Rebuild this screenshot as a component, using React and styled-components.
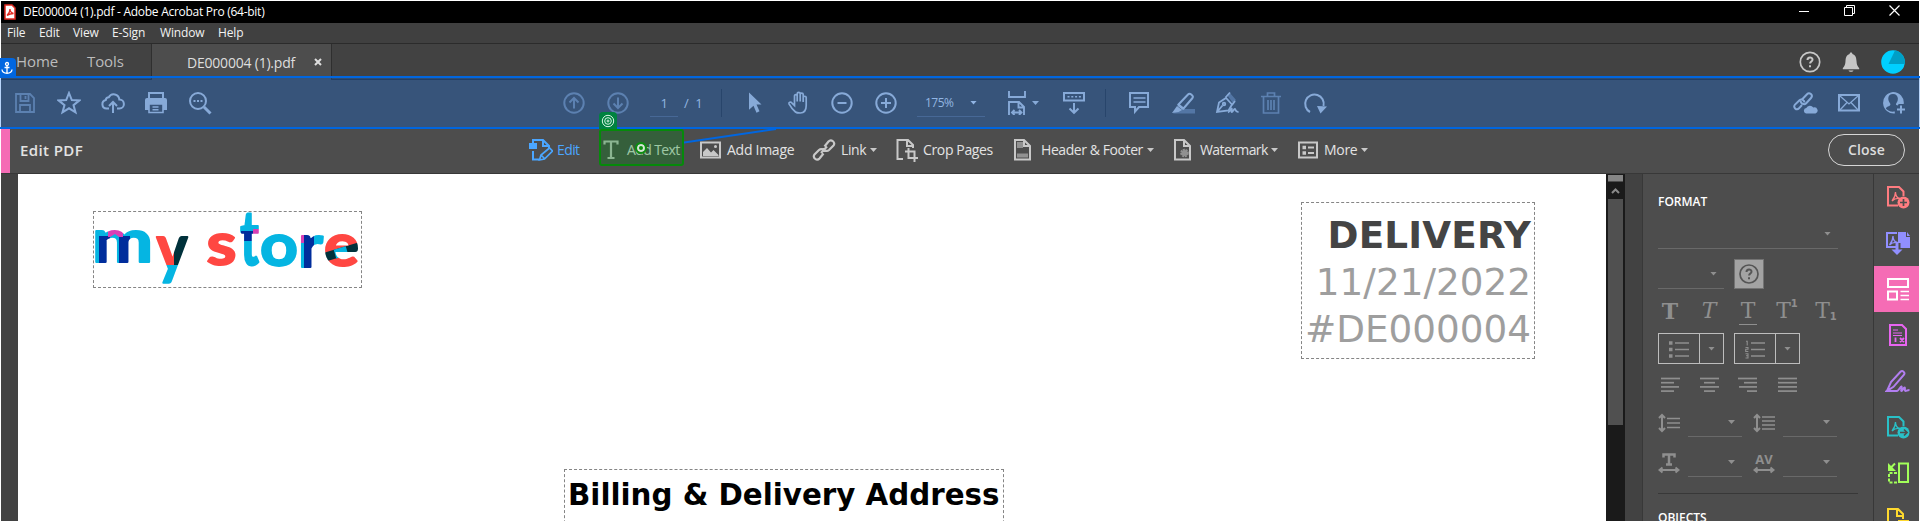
import React from "react";
import styled, { createGlobalStyle, css } from "styled-components";

const Global = createGlobalStyle`
  * { box-sizing: border-box; }
  body { margin: 0; background: #fff; overflow: hidden; }
`;

const Screen = styled.div`
  position: relative;
  width: 1920px;
  height: 521px;
  padding: 1px 1px 0;
  overflow: hidden;
  font-family: "Open Sans", "Noto Sans", sans-serif;
  color: #e3e3e3;
`;
const AppWindow = styled.div`
  display: flex;
  flex-direction: column;
  height: 520px;
  overflow: hidden;
  background: #4d4d4d;
`;

/* title and menu */
const TitleBar = styled.header`
  display: flex;
  align-items: center;
  flex: none;
  height: 22px;
  padding: 0 19px 0 3px;
  background: #000;
  color: #fff;
  font-size: 12px;
`;
const AppTitle = styled.span`
  flex: 1;
  margin-left: 7px;
  line-height: 20px;
  letter-spacing: -0.27px;
  white-space: nowrap;
`;
const WindowButtons = styled.div`
  display: flex;
  gap: 34px;
  margin-top: -3px;
`;
const MenuBar = styled.nav`
  display: flex;
  flex: none;
  gap: 14px;
  height: 21px;
  padding-left: 6px;
  background: #404040;
  border-bottom: 1px solid #2b2b2b;
  color: #f2f2f2;
  font-size: 12px;
  line-height: 20px;
`;
const MenuItem = styled.span`
  width: ${(p) => p.$w}px;
  letter-spacing: -0.15px;
  white-space: nowrap;
`;

/* document tabs */
const TabBar = styled.div`
  display: flex;
  flex: none;
  height: 36px;
  background: #424242;
  line-height: 35px;
`;
const TabLinks = styled.div`
  display: flex;
  gap: 29px;
  width: 151px;
  padding-left: 15px;
  border-right: 1px solid #2f2f2f;
  border-bottom: 1px solid #2f2f2f;
  color: #bcbcbc;
  font-size: 15px;
  letter-spacing: -0.1px;
`;
const DocumentTab = styled.div`
  display: flex;
  align-items: center;
  gap: 19px;
  width: 180px;
  padding-left: 35px;
  background: #4d4d4d;
  border-right: 1px solid #2f2f2f;
  color: #dedede;
  font-size: 14px;
  letter-spacing: -0.21px;
  white-space: nowrap;
`;
const TabActions = styled.div`
  display: flex;
  flex: 1;
  align-items: center;
  justify-content: flex-end;
  gap: 20px;
  padding-right: 14px;
  border-bottom: 1px solid #2f2f2f;
  color: #c6c6c6;
`;

/* main toolbar */
const Toolbar = styled.div`
  display: flex;
  align-items: center;
  flex: none;
  height: 49px;
  padding: 0 4px 1px 2px;
  border-bottom: 2px solid #3a3a3a;
  color: #bcc4cf;
`;
const ToolSlot = styled.div`
  display: flex;
  align-items: center;
  justify-content: center;
  flex: none;
  width: ${(p) => p.$w || 44}px;
  color: ${(p) => (p.$dim ? "#808b99" : "inherit")};
`;
const Spacer = styled.div`
  flex: none;
  width: ${(p) => p.$w}px;
`;
const Grow = styled.div`
  flex: 1;
`;
const ToolDivider = styled.div`
  flex: none;
  width: 1px;
  height: 28px;
  background: #383838;
`;
const NumberField = styled.div`
  display: flex;
  align-items: center;
  justify-content: ${(p) => (p.$between ? "space-between" : "center")};
  width: ${(p) => p.$w}px;
  height: 28px;
  padding: ${(p) => (p.$between ? "0 8px 0 8px" : 0)};
  border-bottom: 1px solid #636973;
  font-size: ${(p) => (p.$between ? 12 : 13)}px;
  letter-spacing: -0.5px;
  color: #c9d3df;
`;
const PageTotal = styled.span`
  width: 30px;
  margin-left: 6px;
  font-size: 13px;
  word-spacing: 3px;
  color: #c9d3df;
`;
const Caret = styled.i`
  flex: none;
  width: 7px;
  height: 4px;
  background: currentColor;
  clip-path: polygon(0 0, 100% 0, 50% 100%);
`;

/* edit bar */
const EditBar = styled.div`
  display: flex;
  align-items: center;
  flex: none;
  height: 45px;
  padding-right: 14px;
  padding-bottom: 2px;
  border-bottom: 1px solid #383838;
  background: linear-gradient(90deg, #f56cb5 9px, #4d4d4d 9px);
`;
const EditHeading = styled.h1`
  width: 528px;
  margin: 0;
  padding-left: 19px;
  font-size: 15px;
  font-weight: 600;
  letter-spacing: 0.4px;
  line-height: 42px;
`;
const EditTool = styled.div`
  display: flex;
  align-items: center;
  gap: ${(p) => p.$gap || 4}px;
  margin-left: ${(p) => p.$ml || 0}px;
  height: 36px;
  color: ${(p) => (p.$active ? "#4ba6ff" : "#c8c8c8")};
`;
const EditLabel = styled.span`
  width: ${(p) => p.$w}px;
  color: ${(p) => (p.$active ? "#4ba6ff" : "#e3e3e3")};
  font-size: 14px;
  letter-spacing: ${(p) => p.$ls}px;
  line-height: 36px;
  white-space: nowrap;
`;
const LabelCaret = styled(Caret)`
  margin-left: -${(p) => p.$pull}px;
`;
const CloseButton = styled.button`
  width: 77px;
  height: 32px;
  padding: 0 0 1px;
  background: none;
  border: 1px solid #d6d6d6;
  border-radius: 16px;
  color: #dcdcdc;
  font: 600 14px "Open Sans", sans-serif;
  letter-spacing: 0.2px;
`;

/* document area */
const Workspace = styled.main`
  display: flex;
  flex: 1;
  min-height: 0;
  background: #424242;
`;
const Page = styled.section`
  display: grid;
  flex: none;
  grid-template-columns: 270px 1fr 234px;
  grid-template-rows: 295px 1fr;
  width: 1588px;
  margin-left: 17px;
  padding-right: 71px;
  padding-left: 75px;
  background: #fff;
`;
const selectable = css`
  border: 1px dashed #858585;
`;
const LogoFrame = styled.div`
  ${selectable}
  align-self: start;
  width: 269px;
  height: 77px;
  margin-top: 37px;
`;
const LogoArt = styled.svg`
  display: block;
  margin: -1px;
  overflow: visible;
  font: 700 60px Lato, sans-serif;
`;
const DeliveryBlock = styled.div`
  ${selectable}
  grid-column: 3;
  width: 234px;
  height: 157px;
  margin-top: 28px;
  padding: 9px 3px 0 0;
  color: #9e9e9e;
  font: 37.33px/47px "DejaVu Sans", sans-serif;
  white-space: nowrap;
`;
const DeliveryLine = styled.div`
  display: flex;
  justify-content: flex-end;
  color: ${(p) => (p.$strong ? "#444" : "inherit")};
  font-weight: ${(p) => (p.$strong ? 700 : 400)};
  letter-spacing: ${(p) => (p.$strong ? 0.15 : 0)}px;
`;
const AddressHeading = styled.h2`
  ${selectable}
  grid-column: 1 / 4;
  width: 440px;
  height: 80px;
  margin: 0 0 0 471px;
  padding-left: 3px;
  color: #000;
  font: 700 29.33px/50px "DejaVu Sans", sans-serif;
  white-space: nowrap;
`;
const ScrollTrack = styled.div`
  display: flex;
  flex: none;
  flex-direction: column;
  width: 19px;
  padding: 1px 2px 0 2px;
  background: #1a1a1a;
`;
const ScrollSplit = styled.div`
  height: 7px;
  background: #858585;
  border-bottom: 1px solid #4d4d4d;
`;
const ScrollUp = styled.div`
  display: flex;
  align-items: center;
  justify-content: center;
  height: 17px;
  color: #8a8a8a;
`;
const ScrollThumb = styled.div`
  width: 15px;
  height: 226px;
  background: #505050;
`;
const Gutter = styled.div`
  flex: none;
  width: 17px;
`;

/* format panel */
const Panel = styled.aside`
  flex: none;
  width: 231px;
  padding: 19px 15px 0;
  background: #4d4d4d;
  border-left: 1px solid #383838;
  color: #8f8f8f;
`;
const PanelTitle = styled.h3`
  margin: 0;
  color: #fff;
  font-size: 12px;
  font-weight: 600;
  line-height: 18px;
`;
const PanelRow = styled.div`
  display: flex;
  align-items: center;
  height: ${(p) => p.$h}px;
  margin-top: ${(p) => p.$mt || 0}px;
`;
const SelectLine = styled.div`
  display: flex;
  align-items: center;
  justify-content: flex-end;
  width: ${(p) => p.$w}px;
  height: ${(p) => p.$h || 29}px;
  margin-left: ${(p) => p.$ml || 0}px;
  padding-right: 7px;
  padding-top: ${(p) => p.$drop || 0}px;
  border-bottom: 1px solid #696969;
`;
const HelpTile = styled.div`
  display: flex;
  align-items: center;
  justify-content: center;
  width: 30px;
  height: 30px;
  margin-left: 10px;
  background: #a3a3a3;
  border: 1px solid #737373;
  color: #555;
`;
const GlyphRow = styled.div`
  display: flex;
  gap: 15px;
  height: 40px;
  margin: 2px 0 0 0;
  align-items: center;
`;
const StyleGlyph = styled.span`
  display: flex;
  flex: none;
  justify-content: center;
  width: 24px;
  font: ${(p) => (p.$italic ? "italic " : "")} ${(p) => (p.$bold ? 700 : 400)} 22px/22px "DejaVu Serif", serif;
  white-space: nowrap;
  ${(p) => p.$under && css`height: 25px; border-bottom: 1px solid #8f8f8f; width: 18px; margin: 3px 3px 0;`}
`;
const Script = styled.span`
  font: 700 10px/12px "DejaVu Sans", sans-serif;
  margin-top: ${(p) => (p.$low ? 11 : -2)}px;
`;
const SplitButton = styled.div`
  display: flex;
  width: 66px;
  height: 31px;
  margin-right: 10px;
  border: 1px solid #bdbdbd;
`;
const SplitMain = styled.div`
  display: flex;
  align-items: center;
  justify-content: center;
  width: 41px;
  border-right: 1px solid #bdbdbd;
`;
const SplitMore = styled.div`
  display: flex;
  flex: 1;
  align-items: center;
  justify-content: center;
`;
const AlignRow = styled.div`
  display: flex;
  gap: 15px;
  height: 16px;
  margin: 13px 0 0 1px;
`;
const Rule = styled.hr`
  width: 200px;
  height: 1px;
  margin: 16px 0 15px;
  border: 0;
  background: #383838;
`;

/* tool rail */
const Rail = styled.aside`
  flex: none;
  width: 46px;
  background: #4d4d4d;
  border-left: 1px solid #383838;
`;
const RailItem = styled.div`
  display: flex;
  align-items: center;
  justify-content: center;
  height: 46px;
  padding-left: 3px;
  color: ${(p) => p.$color};
  background: ${(p) => p.$bg || "none"};
`;

/* annotation layers drawn over the window */
const AnchorRegion = styled.div`
  position: absolute;
  top: 76px;
  left: 0;
  width: 1920px;
  height: 53px;
  background: rgba(0, 105, 240, 0.28);
  border: solid #0066e0;
  border-width: 2px 0;
`;
const AnchorBadge = styled.div`
  position: absolute;
  top: 58px;
  left: 0;
  display: flex;
  align-items: center;
  justify-content: center;
  width: 16px;
  height: 19px;
  padding-right: 2px;
  border-radius: 0 4px 0 0;
  background: #0066e0;
  color: #fff;
`;
const TargetRegion = styled.div`
  position: absolute;
  top: 129px;
  left: 599px;
  width: 85px;
  height: 37px;
  background: rgba(0, 140, 20, 0.3);
  border: 2px solid #058a0a;
  border-radius: 3px;
`;
const TargetBadge = styled.div`
  position: absolute;
  top: 112px;
  left: 599px;
  display: flex;
  align-items: center;
  justify-content: center;
  width: 18px;
  height: 17px;
  padding-top: 1px;
  border-radius: 4px 4px 0 0;
  background: #00823f;
  color: #d8f5e4;
`;
const TargetPoint = styled.div`
  position: absolute;
  top: 144px;
  left: 637px;
  width: 8px;
  height: 8px;
  border: 2px solid #d5e6d5;
  border-radius: 50%;
  background: #0c8f10;
  outline: 2px solid #0c8f10;
`;
const Connector = styled.svg`
  position: absolute;
  top: 124px;
  left: 684px;
`;

const Icon = ({ w = 24, h = w, sw = 2, children }) => (
  <svg width={w} height={h} viewBox={`0 0 ${w} ${h}`} fill="none" stroke="currentColor" strokeWidth={sw}>
    {children}
  </svg>
);
const PAGE = "M4 2h9l6 6v13.5H4z";
const PdfMark = ({ x = 0, y = 0 }) => (
  <path transform={`translate(${x} ${y})`} strokeWidth="1.3" d="M3 10C5 7.500 6.500 4.500 6.500 1c0 3.500 1.500 6 4.500 6.500C8 7 5 8 3 10z" />
);

const cyan = "#05b5e2", navy = "#002d9c", pink = "#d83fb5", red = "#ff4742", dark = "#00313b";
/* letter, left edge, advance, font size, baseline */
const logoLetters = [
  ["m", 92, 61, 60, 262], ["y", 156.5, 31, 66, 271], ["s", 206.5, 30, 60, 265], ["t", 240, 19, 76, 265],
  ["o", 260, 38, 60, 266], ["r", 298, 25, 60, 267], ["e", 324, 35, 60, 266],
];
const Logo = () => (
  <LogoArt width="269" height="77" viewBox="93 211 269 77">
    <defs>
      <pattern id="paint" patternUnits="userSpaceOnUse" x="90" y="200" width="280" height="100" viewBox="90 200 280 100">
        <rect x="90" y="200" width="280" height="100" fill={cyan} />
        <path fill={navy} d="M99 236h11v30H99zM119 236h11v30h-11zM241 231h12v10h-12zM304 234h10v34h-10z" />
        <path fill={pink} d="M108 226h15v11h-4l-4-3-5 3h-2zM253 229h8v12h-8zM296 228h8v15h-8z" />
        <path fill={red} d="M153 228h21v37h-21zM204 228h34v42h-34zM324 228h38v42h-38z" />
        <path fill={dark} d="M174 228h16v30l-8 7h-8z" />
        <path stroke={dark} strokeWidth="9" d="M322 258L362 246" />
        <path stroke={cyan} strokeWidth="9" d="M335 254.1L347 250.5" />
      </pattern>
    </defs>
    {logoLetters.map(([c, x, len, size, y]) => (
      <text key={c} x={x} y={y} fontSize={size} textLength={len} lengthAdjust="spacingAndGlyphs"
        fill="url(#paint)" stroke="url(#paint)" strokeWidth="2" strokeLinejoin="round">{c}</text>
    ))}
  </LogoArt>
);

const Circle = ({ children }) => (
  <Icon w={24}><circle cx="12" cy="12" r="9.7" />{children}</Icon>
);
const Lines = ({ rows }) => (
  <Icon w={24} h={16} sw={1.7}>
    {rows.map(([a, b], i) => <path key={i} d={`M${a} ${1.5 + i * 4.2}H${b}`} />)}
  </Icon>
);

export default function App() {
  return (
    <Screen>
      <Global />
      <AppWindow>
        <TitleBar>
          <Icon w={12} h={16} sw={1.3}>
            <path d="M1 1h7l3 3v11H1z" fill="#fff" stroke="#e02a20" strokeWidth="1.5" />
            <path stroke="#e02a20" d="M3 11.500c2-2 3-4 3-6.500 0 2.500 1.500 4 3.500 4.500-2 0-4.500.7-6.500 2z" />
          </Icon>
          <AppTitle>DE000004 (1).pdf - Adobe Acrobat Pro (64-bit)</AppTitle>
          <WindowButtons>
            <Icon w={11} h={11} sw={1}><path d="M0 6.500h10" /></Icon>
            <Icon w={11} h={11} sw={1}><path d="M.5 2.500h8v8h-8zM2.500 2.500v-2h8v8h-2" /></Icon>
            <Icon w={11} h={11} sw={1.2}><path d="M.5.500l10 10M10.500.500l-10 10" /></Icon>
          </WindowButtons>
        </TitleBar>

        <MenuBar>
          <MenuItem $w={18}>File</MenuItem>
          <MenuItem $w={20}>Edit</MenuItem>
          <MenuItem $w={25}>View</MenuItem>
          <MenuItem $w={34}>E-Sign</MenuItem>
          <MenuItem $w={44}>Window</MenuItem>
          <MenuItem $w={25}>Help</MenuItem>
        </MenuBar>

        <TabBar>
          <TabLinks><span>Home</span><span>Tools</span></TabLinks>
          <DocumentTab>
            <span>DE000004 (1).pdf</span>
            <Icon w={8} h={8} sw={2}><path d="M1 1l6 6M7 1L1 7" /></Icon>
          </DocumentTab>
          <TabActions>
            <Icon w={22}>
              <circle cx="11" cy="11" r="9.7" strokeWidth="1.7" />
              <path d="M8.500 9c0-3.300 5-3.300 5-.3 0 1.800-2.400 1.900-2.400 3.800" /><path d="M11 14.200v2" />
            </Icon>
            <Icon w={20} h={22}>
              <path fill="currentColor" stroke="none" d="M10 1.500c.9 0 1.400.7 1.400 1.500 3.100.8 3.900 3.500 4.100 7 .2 3.300.7 5 2.700 7.200v1H1.800v-1C3.800 15 4.300 13.300 4.500 10c.2-3.500 1-6.200 4.100-7 0-.8.500-1.500 1.400-1.500zM7.500 19.500h5c-.4 1.800-4.600 1.800-5 0z" />
            </Icon>
            <Icon w={24}>
              <circle cx="12" cy="12" r="11.8" fill="#00cfff" stroke="none" />
              <path fill="#009fc6" stroke="none" d="M14 .4A11.800 11.800 0 0 1 23.800 14L7.500 14z" />
            </Icon>
          </TabActions>
        </TabBar>

        <Toolbar>
          <ToolSlot $dim><Icon w={22} sw={1.8}><path d="M2 2h14l4 4v14H2zM6.500 2v7h8V2M6 20v-7h10v7M11.500 4v3" /></Icon></ToolSlot>
          <ToolSlot><Icon w={24}><path d="M12 2l2.800 7 7.600.4-5.900 4.700 2 7.300L12 17.300l-6.500 4.100 2-7.300L1.600 9.400 9.200 9z" /></Icon></ToolSlot>
          <ToolSlot><Icon w={24}><path d="M8 17.500H5.500a4.300 4.300 0 0 1-.7-8.500 3 3 0 0 1 3-2.700 5.600 5.600 0 0 1 10.500 2.200 4.500 4.500 0 0 1 .2 9H16M12 22V11M8 15l4-4 4 4" /></Icon></ToolSlot>
          <ToolSlot $w={42}><Icon w={24}><path d="M5 7.500V2h14v5.500" /><path fill="currentColor" stroke="none" d="M3 7h18q2 0 2 2v10h-4v-6H5v6H1V9q0-2 2-2z" /><path d="M5 13h14v8.500H5zM8.500 16h6M8.500 18.700h6" strokeWidth="1.6" /></Icon></ToolSlot>
          <ToolSlot $w={46}><Icon w={24}><circle cx="10" cy="10" r="8" /><path d="M16 16l6.500 6.500" strokeWidth="3" /><path d="M5.500 10h2M9 10h2M12.500 10h2" /></Icon></ToolSlot>
          <Spacer $w={329} />
          <ToolSlot $dim><Circle><path d="M12 17.500V7M7.500 11.500L12 7l4.500 4.500" /></Circle></ToolSlot>
          <ToolSlot $dim><Circle><path d="M12 6.500V17M7.500 12.500L12 17l4.500-4.500" /></Circle></ToolSlot>
          <Spacer $w={10} />
          <NumberField $w={28}>1</NumberField>
          <PageTotal>/ 1</PageTotal>
          <Spacer $w={7} />
          <ToolDivider />
          <Spacer $w={10} />
          <ToolSlot><Icon w={24}><path fill="currentColor" stroke="none" d="M7 1.500l12.500 12h-5l3 6.800-3 1.400-3-7-4.500 4z" /></Icon></ToolSlot>
          <ToolSlot><Icon w={24} sw={1.7}><path d="M8 21.500C5 19 3 16 1.500 13.300c-.5-1.600 1.600-2.400 2.800-1L7 15V5.500C7 3.700 9.700 3.700 9.700 5.500V11 3.200c0-1.900 3-1.900 3 0V11 4c0-1.800 3-1.800 3 0v7.500V7c0-1.700 3-1.700 3 0v8c0 5-2 7.500-6 7.500-2 0-3.500 0-4.700-1z" transform="translate(1.5 -.5)" /></Icon></ToolSlot>
          <ToolSlot><Circle><path d="M7.500 12h9" /></Circle></ToolSlot>
          <ToolSlot><Circle><path d="M7 12h10M12 7v10" /></Circle></ToolSlot>
          <Spacer $w={9} />
          <NumberField $between $w={68}>175%<Caret /></NumberField>
          <Spacer $w={20} />
          <ToolSlot $w={24}><Icon w={20} h={24}><path d="M2 0v6h16V0M2 24V11h10l5 5v8M11.500 11v5.500H17M5 21.500h9.500M7.500 19L5 21.500 7.500 24M12 19l2.500 2.500L12 24" strokeWidth="1.9" /></Icon></ToolSlot>
          <ToolSlot $w={13}><Caret /></ToolSlot>
          <Spacer $w={10} />
          <ToolSlot><Icon w={24}><path d="M2 2h20v7.500H2zM12 12v9.500M7.500 17.500l4.500 4.300 4.500-4.300" /><path d="M5.500 5.700h14" strokeDasharray="2 1.8" strokeWidth="1.5" /></Icon></ToolSlot>
          <Spacer $w={9} />
          <ToolDivider />
          <Spacer $w={11} />
          <ToolSlot><Icon w={24}><path d="M3 2h18v14h-9l-4 4.500V16H3z" /><path d="M6.500 7h12M6.500 11h12" strokeWidth="1.5" /></Icon></ToolSlot>
          <ToolSlot><Icon w={24}><path fill="#747c88" stroke="none" d="M6 18h18v4.500H2z" /><path d="M7.500 13.500L17 3.500c2-2 6 1.500 4.500 3.500l-9 10.500zM7 14l5 4" /><path fill="currentColor" stroke="none" d="M6 15l5 4-3.500 2L1 22z" /></Icon></ToolSlot>
          <ToolSlot><Icon w={24} sw={1.8}><path fill="#747c88" stroke="none" d="M12 4l3-2 6 7-3 3z" /><path d="M2 21l2-9.500L11 7l6 6.500-3.500 6zM2 21l5.500-6.500M10.500 6.500L15 1.500M17 14l3-4" /><circle cx="9" cy="13" r="1.3" /><path d="M13 21.500c2-.5 2.500-4 3.500-4s-.7 3.500.3 3.500 2-3 3-3 .2 3 3.700 3" /></Icon></ToolSlot>
          <ToolSlot $dim><Icon w={24}><path d="M2 5.500h20M8.500 5V2h7v3M4.500 6v16h15V6M9 9v10M12 9v10M15 9v10" strokeWidth="1.7" /></Icon></ToolSlot>
          <ToolSlot><Icon w={24}><path d="M7 21A9.300 9.300 0 1 1 20.500 15" /><path fill="currentColor" stroke="none" d="M14 15l10 .5-6.500 7z" /></Icon></ToolSlot>
          <Grow />
          <ToolSlot><Icon w={26} h={24}><path d="M10 14l-3 3.300c-2.500 2.500-6.500-1-4-3.700l4.500-4.300c2-1.700 5 0 5 2.200M10 8.500L15 3.200c2.500-2.500 6.500 1 4 3.800L14 12.500c-2 1.500-5.500 0-5.300-2.500" /><path fill="currentColor" stroke="none" d="M14 22.500a2.800 2.800 0 0 1 .3-5.500 4 4 0 0 1 7-.5 3 3 0 0 1 2.200 6z" /></Icon></ToolSlot>
          <ToolSlot><Icon w={24} h={20}><path d="M2 2h20v15.500H2z" /><path d="M3 3l9 8 9-8M3 17l7-7.500M21 17l-7-7.500" strokeWidth="1.3" /></Icon></ToolSlot>
          <ToolSlot><Icon w={24}><path fill="currentColor" stroke="none" fillRule="evenodd" d="M12 1a10.700 10.700 0 0 1 10.700 12h-5l-1 1.500c-2-.3-2-1.500-1.200-2.500 2.700-4 1.500-9-3.500-9s-6 5-3.200 9c1 1.500.7 2.500-.5 3-2 .7-3 1.200-3.500 2.500 2 2.500 5 3.500 9 3v2A10.700 10.700 0 1 1 12 1z" /><path d="M20 14.500v8M16 18.500h8" /></Icon></ToolSlot>
        </Toolbar>

        <EditBar>
          <EditHeading>Edit PDF</EditHeading>
          <EditTool $active>
            <Icon w={24}><path fill="currentColor" stroke="none" d="M0 5h8v6H0z" /><path d="M4 5V2h10l6 6v2M14 2v6h5M4 13v8.500h6" /><path d="M10.500 22l1.500-5 8.500-7 3 3-8 8zM12 17l3.500 3.500" strokeWidth="1.7" /></Icon>
            <EditLabel $active $w={24} $ls={-0.6}>Edit</EditLabel>
          </EditTool>
          <EditTool $ml={18}>
            <Icon w={24}><path d="M5.500 6.500v-3h13v3M12 4v16M8.500 20h7" strokeWidth="2.2" /></Icon>
            <EditLabel $w={55} $ls={-0.6}>Add Text</EditLabel>
          </EditTool>
          <EditTool $ml={17}>
            <Icon w={24} h={20}><path d="M2 2.500h19v15H2z" /><path fill="currentColor" stroke="none" d="M4 16v-4l4-4 4 4.500 2.500-2.500 5 5v1z" /><circle cx="16.5" cy="6.500" r="1.5" fill="currentColor" stroke="none" /></Icon>
            <EditLabel $w={68} $ls={-0.27}>Add Image</EditLabel>
          </EditTool>
          <EditTool $ml={17} $gap={5}>
            <Icon w={24}><path strokeWidth="2.2" d="M11.500 15.500l-4 5c-2.700 3-7.500-1-5-4l4.500-4.500c2.200-2 5.500-.5 5.500 2M12.500 8.500l4-5c2.700-3 7.500 1 5 4L17 12c-2.200 2-5.500.5-5.500-2M9 15l6-6.500" /></Icon>
            <EditLabel $w={26} $ls={-0.4}>Link</EditLabel>
            <LabelCaret $pull={2} />
          </EditTool>
          <EditTool $ml={17} $gap={5}>
            <Icon w={24}><path d="M9 21H3.500V2H14l5 5v3M13 2v6h6M14.500 10v10H24M11 13.500h9.500V24" /></Icon>
            <EditLabel $w={72} $ls={-0.36}>Crop Pages</EditLabel>
          </EditTool>
          <EditTool $ml={15} $gap={7}>
            <Icon w={24}><path d={PAGE} transform="translate(1 0)" /><path d="M14 2v6h6" /><path fill="#919191" stroke="none" d="M7 4h6v6H7zM7 15.500h11v4H7z" /></Icon>
            <EditLabel $w={103} $ls={-0.42}>Header &amp; Footer</EditLabel>
            <LabelCaret $pull={4} />
          </EditTool>
          <EditTool $ml={16} $gap={6}>
            <Icon w={24}><path d={PAGE} transform="translate(1 0)" /><path d="M14 2v6h6" /><circle cx="14.500" cy="15" r="3.3" strokeDasharray="2 .7" stroke="#919191" /><circle cx="14.500" cy="15" r="3" fill="#919191" stroke="none" /></Icon>
            <EditLabel $w={68} $ls={-0.6}>Watermark</EditLabel>
            <LabelCaret $pull={3} />
          </EditTool>
          <EditTool $ml={18} $gap={4}>
            <Icon w={24} h={20}><path d="M3 2.500h18v15H3zM12 7.500h6M12 13h6" /><path d="M6.500 7.500h3.500M6.500 13h3.500" strokeWidth="3.5" /></Icon>
            <EditLabel $w={34} $ls={-0.3}>More</EditLabel>
            <LabelCaret $pull={1} />
          </EditTool>
          <Grow />
          <CloseButton>Close</CloseButton>
        </EditBar>

        <Workspace>
          <Page>
            <LogoFrame><Logo /></LogoFrame>
            <DeliveryBlock>
              <DeliveryLine $strong>DELIVERY</DeliveryLine>
              <DeliveryLine>11/21/2022</DeliveryLine>
              <DeliveryLine>#DE000004</DeliveryLine>
            </DeliveryBlock>
            <AddressHeading>Billing &amp; Delivery Address</AddressHeading>
          </Page>
          <ScrollTrack>
            <ScrollSplit />
            <ScrollUp><Icon w={9} h={8}><path d="M1 6l3.500-3.500L8 6" /></Icon></ScrollUp>
            <ScrollThumb />
          </ScrollTrack>
          <Gutter />
          <Panel>
            <PanelTitle>FORMAT</PanelTitle>
            <PanelRow $h={38}><SelectLine $w={180} $h={38} $drop={8}><Caret /></SelectLine></PanelRow>
            <PanelRow $h={30} $mt={10}>
              <SelectLine $w={66} $h={30}><Caret /></SelectLine>
              <HelpTile>
                <Icon w={22} sw={1.7}><circle cx="11" cy="11" r="9" /><path d="M8.500 9c0-3.300 5-3.300 5-.3 0 1.800-2.400 1.900-2.400 3.800M11 14.200v2" strokeWidth="2" /></Icon>
              </HelpTile>
            </PanelRow>
            <GlyphRow>
              <StyleGlyph $bold>T</StyleGlyph>
              <StyleGlyph $italic>T</StyleGlyph>
              <StyleGlyph $under>T</StyleGlyph>
              <StyleGlyph>T<Script>1</Script></StyleGlyph>
              <StyleGlyph>T<Script $low>1</Script></StyleGlyph>
            </GlyphRow>
            <PanelRow $h={31} $mt={2}>
              <SplitButton>
                <SplitMain><Icon w={20} h={18} sw={1.7}><path d="M6 3h14M6 9.500h14M6 16h14" /><path d="M0 3h3.500M0 9.500h3.500M0 16h3.500" strokeWidth="3.5" /></Icon></SplitMain>
                <SplitMore><Caret /></SplitMore>
              </SplitButton>
              <SplitButton>
                <SplitMain><Icon w={20} h={20} sw={1.7}><path d="M6 4h14M6 10.500h14M6 17h14" /><path d="M1 2.200h1.200V6.500M.5 8.500h2.500v1.700H.7v2.300h2.600M.5 14.700h2.500v4.300H.5M1 16.800h2" strokeWidth="1.1" /></Icon></SplitMain>
                <SplitMore><Caret /></SplitMore>
              </SplitButton>
            </PanelRow>
            <AlignRow>
              <Lines rows={[[2, 21], [2, 15], [2, 20], [2, 15]]} />
              <Lines rows={[[2, 21], [6, 17], [2, 21], [6, 17]]} />
              <Lines rows={[[1, 20], [7, 20], [2, 20], [10, 20]]} />
              <Lines rows={[[2, 21], [2, 21], [2, 21], [2, 21]]} />
            </AlignRow>
            <PanelRow $h={29} $mt={15}>
              <Icon w={22} h={20}><path d="M4 2v16M1 5l3-3 3 3M1 15l3 3 3-3" /><path d="M9 5.500h13M9 10h13M9 14.500h13" strokeWidth="1.7" /></Icon>
              <SelectLine $w={54} $ml={8}><Caret /></SelectLine>
              <Spacer $w={11} />
              <Icon w={22} h={20}><path d="M4 2v16M1 5l3-3 3 3M1 15l3 3 3-3" /><path d="M9 4h13M9 8h13M9 12h13M9 16h13" strokeWidth="1.7" /></Icon>
              <SelectLine $w={54} $ml={8}><Caret /></SelectLine>
            </PanelRow>
            <PanelRow $h={29} $mt={11}>
              <Icon w={22} h={22}><path d="M5.500 5.500V2.500h11v3M11 2v10.500M8 12.500h6" strokeWidth="2.5" /><path d="M1.500 18h19M4.500 15.500l-3 2.500 3 2.500M17.500 15.500l3 2.500-3 2.500" /></Icon>
              <SelectLine $w={54} $ml={8}><Caret /></SelectLine>
              <Spacer $w={11} />
              <Icon w={22} h={22}>
                <text x="11" y="12" textAnchor="middle" fontSize="13" fontWeight="700" fill="currentColor" stroke="none">AV</text>
                <path d="M1.500 18h19M4.500 15.500l-3 2.500 3 2.500M17.500 15.500l3 2.500-3 2.500" />
              </Icon>
              <SelectLine $w={54} $ml={8}><Caret /></SelectLine>
            </PanelRow>
            <Rule />
            <PanelTitle>OBJECTS</PanelTitle>
          </Panel>
          <Rail>
            <RailItem $color="#ff7c80"><Icon w={24}><path d="M12 20.500H2V2h11l4.500 4.500V11" /><PdfMark x={3} y={6} /><circle cx="17.500" cy="17.500" r="6" fill="currentColor" stroke="none" /><path d="M14 17.500h7M17.500 14v7" stroke="#4d4d4d" strokeWidth="1.7" /></Icon></RailItem>
            <RailItem $color="#918fff"><Icon w={26} h={26}><path d="M11 17H2V3h10" /><PdfMark x={1.5} y={5} /><path fill="currentColor" stroke="none" d="M13 2h8v5h4v11h-9.500v-5H13zM22 2l3 4h-3z" /><path d="M12 12v9" strokeWidth="3" /><path fill="currentColor" stroke="none" d="M6.500 19.500h11L12 25z" /></Icon></RailItem>
            <RailItem $color="#fff" $bg="#f56cb5"><Icon w={24}><path d="M2 2h20v8H2zM2 14.500h9v8H2z" /><path d="M14.500 14.500H23M14.500 18.500H23M14.500 22.500H23" strokeWidth="1.3" /></Icon></RailItem>
            <RailItem $color="#e865f0"><Icon w={24}><path d="M4 2h12l4 4v16H4z" /><path d="M7 7h5M7 10h9M7 12.500h9" strokeWidth="1.2" /><path d="M9.500 14.500v4.500M14 15l4 4M18 15l-4 4" strokeWidth="1.8" /></Icon></RailItem>
            <RailItem $color="#b27ef0"><Icon w={26} h={24}><path d="M2 22l4-9L15.500 2.800c2-2 5 .7 3.500 2.900L8.500 17.800 2 22h10c2-.5 3.500-5 4.500-4.500s-1 4.500 0 4.500 2-3.500 3-3.500-.3 3.500 1 3.500 1.500-1 4-1" /></Icon></RailItem>
            <RailItem $color="#29c0c7"><Icon w={24}><path d="M12 20.500H2V2h11l4.500 4.500V11" /><PdfMark x={3} y={6} /><circle cx="17.500" cy="17.500" r="6" fill="currentColor" stroke="none" /><path d="M14 17.500h6M18 14.500l3 3-3 3" stroke="#4d4d4d" strokeWidth="1.7" /></Icon></RailItem>
            <RailItem $color="#a2ff59"><Icon w={24}><path d="M13 2.500h9V21h-9zM9 2.500L3.500 8" /><path fill="currentColor" stroke="none" d="M2 2v8h8z" /><path d="M11 12H3v9.500h9" strokeDasharray="3 1.5" /></Icon></RailItem>
            <RailItem $color="#ffd92e"><Icon w={24}><path d="M10 22H2V2h10l5 5v5M11 2v7h6" /><path fill="currentColor" stroke="none" d="M12 13h11v8H12z" /></Icon></RailItem>
          </Rail>
        </Workspace>
      </AppWindow>

      <AnchorRegion />
      <AnchorBadge>
        <Icon w={12} h={14} sw={1.3}><circle cx="6" cy="3" r="1.5" /><path d="M6 4.500v8M3.500 6.500h5M1 8.500c.5 5 9.500 5 10 0" /></Icon>
      </AnchorBadge>
      <Connector width="96" height="22"><path d="M0 18.500L92 5" stroke="#0066e0" strokeWidth="2" /></Connector>
      <TargetRegion />
      <TargetBadge>
        <Icon w={14} h={14} sw={1}><circle cx="7" cy="7" r="5.7" /><circle cx="7" cy="7" r="3.3" /><circle cx="7" cy="7" r="1" /></Icon>
      </TargetBadge>
      <TargetPoint />
    </Screen>
  );
}
